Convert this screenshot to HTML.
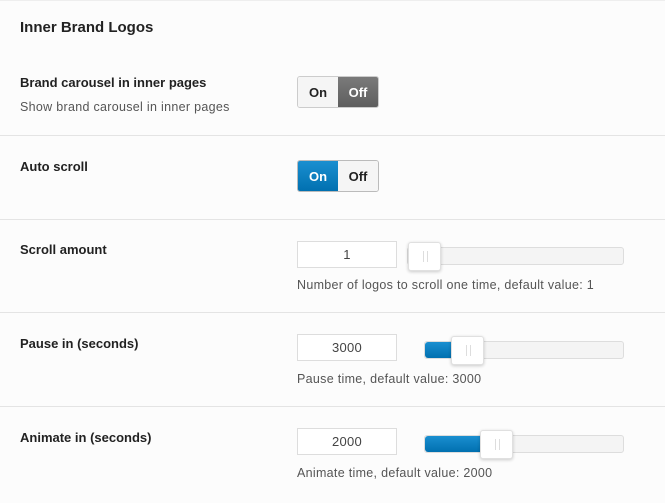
<!DOCTYPE html><html><head><style>
body{margin:0;width:665px;height:503px;background:#fcfcfc;font-family:"Liberation Sans",sans-serif;color:#222;position:relative;overflow:hidden}
.a{position:absolute}
.t{font-weight:bold;font-size:15px;left:20px;top:19px}
.l{left:20px;font-size:13px;font-weight:bold;color:#222}
.d{font-size:12.5px;letter-spacing:.3px;color:#555}
.sep{left:0;width:665px;height:1px;background:#e4e4e4}
.tg{left:297px;width:80px;height:30px;border:1px solid #ccc;border-radius:3px;overflow:hidden;display:flex;font-weight:bold;font-size:13px}
.tg div{flex:1;display:flex;align-items:center;justify-content:center;background:#f5f5f5}
.in{left:297px;width:98px;height:25px;border:1px solid #ddd;background:#fff;text-align:center;line-height:25px;font-size:13px;color:#444;letter-spacing:.3px}
.tr{width:215px;left:407px;height:16px;border:1px solid #ddd;border-radius:3px;background:#f4f4f4}
.fill{height:16px;background:linear-gradient(#1a8fd0,#0170b0);border-radius:3px 0 0 3px}
.h{width:31px;height:27px;background:#fff;border:1px solid #e0e0e0;border-radius:3px;box-shadow:0 1px 3px rgba(0,0,0,.2)}
.h:after{content:"";position:absolute;left:14px;top:8px;width:3px;height:11px;border-left:1px solid #ddd;border-right:1px solid #ddd}
</style></head><body>
<div class="a sep" style="top:0;background:#eee"></div>
<div class="a t">Inner Brand Logos</div>
<div class="a l" style="top:75px">Brand carousel in inner pages</div>
<div class="a d" style="left:20px;top:100px">Show brand carousel in inner pages</div>
<div class="a tg" style="top:76px"><div>On</div><div style="background:linear-gradient(#7a7a7a,#5e5e5e);color:#fff">Off</div></div>
<div class="a sep" style="top:135px"></div>
<div class="a l" style="top:159px">Auto scroll</div>
<div class="a tg" style="top:160px;border-color:#bbb"><div style="background:linear-gradient(#1a8fd0,#0170b0);color:#fff">On</div><div>Off</div></div>
<div class="a sep" style="top:219px"></div>
<div class="a l" style="top:242px">Scroll amount</div>
<div class="a in" style="top:241px">1</div>
<div class="a tr" style="top:247px"></div>
<div class="a h" style="left:408px;top:242px"></div>
<div class="a d" style="left:297px;top:278px">Number of logos to scroll one time, default value: 1</div>
<div class="a sep" style="top:312px"></div>
<div class="a l" style="top:336px">Pause in (seconds)</div>
<div class="a in" style="top:334px">3000</div>
<div class="a tr" style="top:341px;left:424px;width:198px"><div class="fill" style="width:32px"></div></div>
<div class="a h" style="left:451px;top:336px"></div>
<div class="a d" style="left:297px;top:372px">Pause time, default value: 3000</div>
<div class="a sep" style="top:406px"></div>
<div class="a l" style="top:430px">Animate in (seconds)</div>
<div class="a in" style="top:428px">2000</div>
<div class="a tr" style="top:435px;left:424px;width:198px"><div class="fill" style="width:62px"></div></div>
<div class="a h" style="left:480px;top:430px"></div>
<div class="a d" style="left:297px;top:466px">Animate time, default value: 2000</div>
</body></html>
